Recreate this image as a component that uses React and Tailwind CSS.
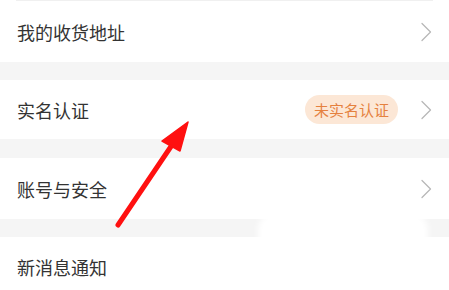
import React from 'react';

const Chevron = () => (
  <svg width="13" height="20" viewBox="0 0 13 20" fill="none" className="shrink-0">
    <polyline points="2,1.5 10.5,10 2,18.5" stroke="#b8b8b8" strokeWidth="1.3" strokeLinecap="round" strokeLinejoin="round" />
  </svg>
);

const Row = ({ label, height, badge, topLine, noArrow }) => (
  <div className="bg-white flex flex-col" style={{ height }}>
    {topLine && <div className="h-px mx-4 bg-[#f0f0f0]" />}
    <div className="flex-1 flex items-center pl-[17px] pr-[16px]">
      <span className="flex-1 text-[18px] text-[#333333] leading-none">{label}</span>
      {badge && (
        <span className="mr-[22px] h-[29px] w-[93px] rounded-full bg-[#fce7d6] text-[#e5813f] text-[15px] flex items-center justify-center leading-none">
          {badge}
        </span>
      )}
      {!noArrow && <Chevron />}
    </div>
  </div>
);

const Gap = ({ h }) => <div className="bg-[#f5f5f5]" style={{ height: h }} />;

export default function App() {
  return (
    <div
      className="relative w-[449px] h-[290px] overflow-hidden bg-white"
      style={{ fontFamily: '"Noto Sans CJK SC", "Noto Sans", sans-serif' }}
    >
      <Row label="我的收货地址" height={62} topLine />
      <Gap h={18} />
      <Row label="实名认证" height={59} badge="未实名认证" />
      <Gap h={19} />
      <Row label="账号与安全" height={61} />
      <Gap h={18} />
      <Row label="新消息通知" height={60} noArrow />

      {/* erased watermark patch */}
      <div className="absolute left-[258px] top-[213px] w-[170px] h-[70px] bg-white rounded-[16px] blur-[3px]" />

      {/* red annotation arrow */}
      <svg className="absolute left-0 top-0 pointer-events-none" width="449" height="290" viewBox="0 0 449 290">
        <line x1="118" y1="225" x2="174" y2="142" stroke="#ff1010" strokeWidth="5" strokeLinecap="round" />
        <polygon points="188,122 162,141 180,151" fill="#ff1010" stroke="#ff1010" strokeWidth="1.5" strokeLinejoin="round" />
      </svg>
    </div>
  );
}
